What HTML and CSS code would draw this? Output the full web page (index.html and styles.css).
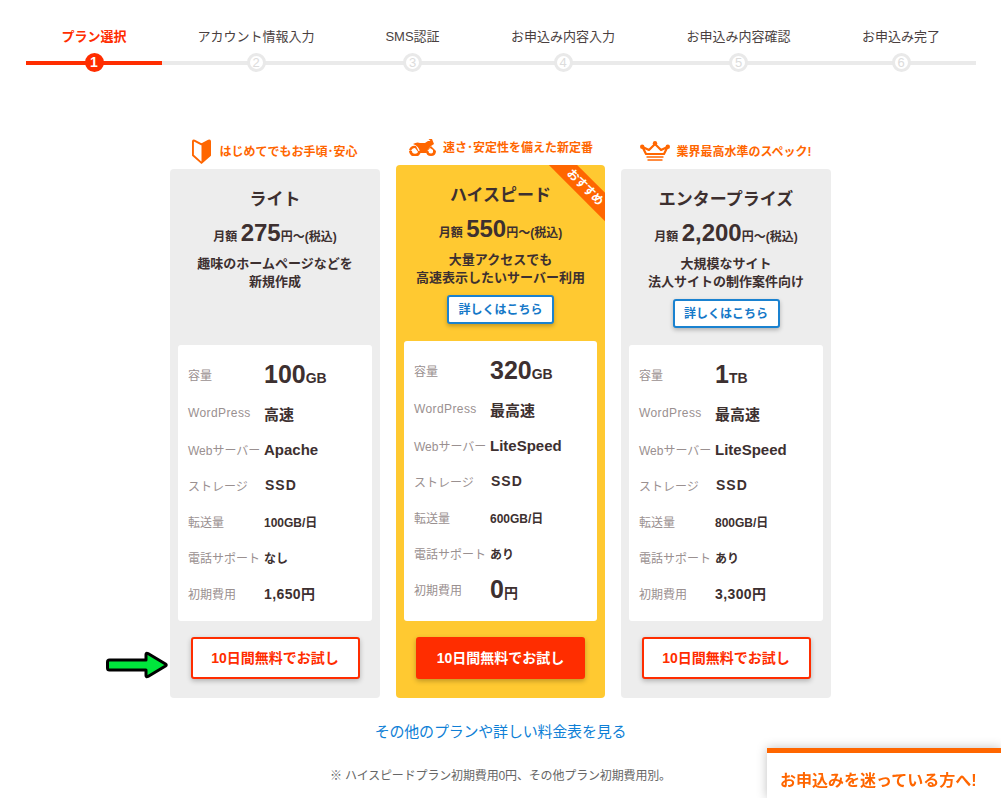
FILE: index.html
```html
<!DOCTYPE html>
<html lang="ja">
<head>
<meta charset="utf-8">
<title>プラン選択</title>
<link rel="stylesheet" href="styles.css">
</head>
<body>
<ol class="steps">
  <li class="step step-1 is-current"><span class="step-name">プラン選択</span><span class="step-num">1</span></li>
  <li class="step step-2"><span class="step-name">アカウント情報入力</span><span class="step-num">2</span></li>
  <li class="step step-3"><span class="step-name">SMS認証</span><span class="step-num">3</span></li>
  <li class="step step-4"><span class="step-name">お申込み内容入力</span><span class="step-num">4</span></li>
  <li class="step step-5"><span class="step-name">お申込み内容確認</span><span class="step-num">5</span></li>
  <li class="step step-6"><span class="step-name">お申込み完了</span><span class="step-num">6</span></li>
</ol>

<main class="plans">
  <section class="plan">
    <p class="tag">
      <svg class="tag-icon icon-leaf" viewBox="0 0 20 26"><path d="M2.500 1.500 L10 5.500 L17.500 1.500 Q19 1 19 2.500 V17 L10 25 L1 17 V2.500 Q1 1 2.500 1.500Z" fill="#fff" stroke="#ff6600" stroke-width="2" stroke-linejoin="round"/><path d="M10 5.500 L17.500 1.500 Q19 1 19 2.500 V17 L10 25Z" fill="#ff6600"/></svg>
      <span>はじめてでもお手頃･安心</span>
    </p>
    <div class="card">
      <div class="head">
        <h2>ライト</h2>
        <p class="price">月額 <b>275</b>円～(税込)</p>
        <p class="desc">趣味のホームページなどを<br>新規作成</p>
      </div>
      <dl class="specs">
        <dt>容量</dt><dd class="v-big"><b>100</b>GB</dd>
        <dt class="latin">WordPress</dt><dd>高速</dd>
        <dt>Webサーバー</dt><dd>Apache</dd>
        <dt>ストレージ</dt><dd class="v-ssd">SSD</dd>
        <dt>転送量</dt><dd class="v-small">100GB/日</dd>
        <dt>電話サポート</dt><dd class="v-tel">なし</dd>
        <dt>初期費用</dt><dd class="v-fee">1,650円</dd>
      </dl>
      <div class="foot"><a class="try" href="#">10日間無料でお試し</a></div>
    </div>
    <svg class="arrow" viewBox="0 0 62 28"><path d="M3.500 9 H40 V3.500 Q40 1.500 42 2.500 L59.500 13 Q61 14 59.500 15 L42 25.500 Q40 26.500 40 24.500 V19 H3.500 Q1.500 19 1.500 17 V11 Q1.500 9 3.500 9Z" fill="#00e63c" stroke="#000" stroke-width="3" stroke-linejoin="round"/></svg>
  </section>

  <section class="plan plan-featured">
    <p class="tag">
      <svg class="tag-icon icon-bike" viewBox="0 0 28 18"><path d="M1 13 A6 5.500 0 1 0 13 13 L10 13 A3 2.800 0 1 1 4 13Z" fill="#ff6600"/><path d="M1 12 Q3 7 8 8 L11 14 H18 L23 8 L28 13 Q28 18 23 18 Q18 18 18 13 L20.500 13 Q20.500 15.500 23 15.500 Q25.500 15.500 25 12 L22 10 L18 15 H11 L7 10 Q4 10 3 13Z" fill="#ff6600"/><path d="M5 6 Q9 3.500 12 5 H17 L20 3 H22.500 L20.500 1 H24 L26 6 L23 8 L18 14 H12 Q11 8 5 6Z" fill="#ff6600"/></svg>
      <span>速さ･安定性を備えた新定番</span>
    </p>
    <div class="card">
      <div class="ribbon"><span>おすすめ</span></div>
      <div class="head">
        <h2>ハイスピード</h2>
        <p class="price">月額 <b>550</b>円～(税込)</p>
        <p class="desc">大量アクセスでも<br>高速表示したいサーバー利用</p>
        <a class="more" href="#">詳しくはこちら</a>
      </div>
      <dl class="specs">
        <dt>容量</dt><dd class="v-big"><b>320</b>GB</dd>
        <dt class="latin">WordPress</dt><dd>最高速</dd>
        <dt>Webサーバー</dt><dd>LiteSpeed</dd>
        <dt>ストレージ</dt><dd class="v-ssd">SSD</dd>
        <dt>転送量</dt><dd class="v-small">600GB/日</dd>
        <dt>電話サポート</dt><dd class="v-tel">あり</dd>
        <dt>初期費用</dt><dd class="v-big"><b>0</b>円</dd>
      </dl>
      <div class="foot"><a class="try try-solid" href="#">10日間無料でお試し</a></div>
    </div>
  </section>

  <section class="plan">
    <p class="tag">
      <svg class="tag-icon icon-crown" viewBox="0 0 30 20"><path d="M6 13 L2.500 6 L9 9 L15 3 L21 9 L27.500 6 L24 13Z" fill="none" stroke="#ff6600" stroke-width="2.200" stroke-linejoin="round"/><circle cx="15" cy="2.200" r="2.200" fill="#ff6600"/><circle cx="2.200" cy="5.800" r="2.200" fill="#ff6600"/><circle cx="27.800" cy="5.800" r="2.200" fill="#ff6600"/><path d="M6.500 16 H23.500 M7.500 19 H22.500" stroke="#ff6600" stroke-width="1.700"/></svg>
      <span>業界最高水準のスペック!</span>
    </p>
    <div class="card">
      <div class="head">
        <h2>エンタープライズ</h2>
        <p class="price">月額 <b>2,200</b>円～(税込)</p>
        <p class="desc">大規模なサイト<br>法人サイトの制作案件向け</p>
        <a class="more" href="#">詳しくはこちら</a>
      </div>
      <dl class="specs">
        <dt>容量</dt><dd class="v-big"><b>1</b>TB</dd>
        <dt class="latin">WordPress</dt><dd>最高速</dd>
        <dt>Webサーバー</dt><dd>LiteSpeed</dd>
        <dt>ストレージ</dt><dd class="v-ssd">SSD</dd>
        <dt>転送量</dt><dd class="v-small">800GB/日</dd>
        <dt>電話サポート</dt><dd class="v-tel">あり</dd>
        <dt>初期費用</dt><dd class="v-fee">3,300円</dd>
      </dl>
      <div class="foot"><a class="try" href="#">10日間無料でお試し</a></div>
    </div>
  </section>
</main>

<p class="all-plans"><a href="#">その他のプランや詳しい料金表を見る</a></p>
<p class="note">※ ハイスピードプラン初期費用0円、その他プラン初期費用別。</p>

<aside class="float-box"><p>お申込みを迷っている方へ!</p></aside>
</body>
</html>
```

FILE: styles.css
```css
* { box-sizing: border-box; }
html, body { margin: 0; padding: 0; }
body {
  height: 798px;
  overflow: hidden;
  background: #fff;
  color: #3d3030;
  font-family: "Liberation Sans", "Noto Sans CJK JP", sans-serif;
}
p, h2, dl, dd, ol { margin: 0; padding: 0; }
a { text-decoration: none; }

/* stepper */
.steps {
  display: flex;
  list-style: none;
  margin: 0 25px 0 26px;
  padding-top: 28px;
}
.step {
  display: flex;
  flex-direction: column;
  align-items: center;
  background: linear-gradient(#eaeaea, #eaeaea) 0 33px / 100% 4px no-repeat;
  color: #4a3f3f;
  font-size: 13px;
  line-height: 18px;
}
.step-1 { width: 136px; }
.step-2 { width: 188px; }
.step-3 { width: 125px; }
.step-4 { width: 176px; }
.step-5 { width: 175px; }
.step-6 { width: 150px; }
.step-name { height: 25px; white-space: nowrap; }
.step-num {
  width: 19px;
  height: 19px;
  border: 3px solid #e9e9e9;
  border-radius: 50%;
  background: #fff;
  color: #dcdcdc;
  font-size: 13px;
  line-height: 13px;
  text-align: center;
}
.is-current {
  background-image: linear-gradient(#ff2d00, #ff2d00);
  color: #ff2d00;
  font-weight: bold;
}
.is-current .step-num {
  border-color: #ff2d00;
  background: #ff2d00;
  color: #fff;
  font-size: 14px;
}

/* plans */
.plans {
  display: grid;
  grid-template-columns: 210px 209px 210px;
  column-gap: 16px;
  width: 661px;
  height: 573px;
  margin: 53px 0 0 170px;
}
.plan {
  position: relative;
  display: flex;
  flex-direction: column;
  justify-content: flex-end;
}
.card {
  position: relative;
  overflow: hidden;
  display: flex;
  flex-direction: column;
  height: 529px;
  border-radius: 4px;
  background: #ededed;
}
.plan-featured .card { height: 533px; background: #ffc931; }

.tag {
  display: flex;
  align-items: center;
  justify-content: center;
  gap: 8px;
  height: 26px;
  margin-bottom: 5px;
  color: #ff6600;
  font-size: 12px;
  font-weight: bold;
  white-space: nowrap;
}
.plan-featured .tag { gap: 7px; }
.plan:last-child .tag { gap: 6px; }
.tag-icon { flex: none; display: block; }
.tag span { position: relative; top: -1px; }
.icon-leaf { width: 19px; height: 25px; }
.icon-bike { width: 28px; height: 18px; }
.icon-crown { width: 30px; height: 20px; }

.head {
  display: flex;
  flex-direction: column;
  align-items: center;
  height: 176px;
  padding-top: 19px;
  text-align: center;
}
.head h2 { font-size: 17px; line-height: 24px; font-weight: bold; }
.price { margin-top: 6px; font-size: 12px; line-height: 30px; font-weight: bold; }
.price b { font-size: 24px; }
.desc { margin-top: 3px; font-size: 13px; line-height: 18px; font-weight: bold; }
.more {
  width: 107px;
  height: 29px;
  margin-top: 8px;
  border: 2px solid #1a82d0;
  border-radius: 3px;
  background: #fff;
  box-shadow: 0 2px 4px rgba(0,0,0,.25);
  color: #1478c8;
  font-size: 12px;
  line-height: 27px;
  font-weight: bold;
}

.specs {
  flex: 1;
  display: grid;
  grid-template-columns: 76px 1fr;
  grid-template-rows: 41px repeat(6, 36px);
  align-items: center;
  margin: 0 8px;
  padding: 9px 0 0 10px;
  border-radius: 3px;
  background: #fff;
}
.specs dt { color: #9a9090; font-size: 12px; white-space: nowrap; }
.specs .latin { letter-spacing: .4px; }
.specs dd { font-size: 15px; font-weight: bold; white-space: nowrap; }
.specs .v-big { font-size: 14px; }
.specs .v-big b { font-size: 25px; }
.specs .v-ssd { padding-left: 1px; letter-spacing: 1px; font-size: 14px; }
.specs .v-small { font-size: 12px; }
.specs .v-tel { font-size: 12px; }
.specs .v-fee { font-size: 14px; letter-spacing: .4px; }

.foot {
  flex: none;
  display: flex;
  justify-content: center;
  height: 77px;
  padding-top: 16px;
}
.try {
  width: 169px;
  height: 42px;
  border: 2px solid #ff2d00;
  border-radius: 3px;
  background: #fff;
  box-shadow: 0 2px 5px rgba(0,0,0,.25);
  color: #ff2d00;
  font-size: 14px;
  line-height: 38px;
  font-weight: bold;
  text-align: center;
}
.try-solid { background: #ff2d00; color: #fff; }

.ribbon {
  position: absolute;
  top: 12px;
  right: -40px;
  width: 120px;
  height: 20px;
  background: #ff6600;
  color: #fff;
  font-size: 12px;
  line-height: 20px;
  letter-spacing: -.7px;
  font-weight: bold;
  text-align: center;
  transform: rotate(45deg);
}
.arrow {
  position: absolute;
  left: -64px;
  top: 526px;
  width: 62px;
  height: 28px;
}

.all-plans { margin-top: 24px; font-size: 15px; line-height: 20px; letter-spacing: -.2px; text-align: center; }
.all-plans a { color: #0f7fd6; }
.note { margin-top: 25px; color: #666; font-size: 12px; line-height: 18px; letter-spacing: -.15px; text-align: center; }

.float-box {
  position: fixed;
  right: 0;
  bottom: 0;
  width: 234px;
  height: 50px;
  padding: 18px 0 0 13px;
  border-top: 5px solid #ff6600;
  background: #fff;
  box-shadow: 0 0 10px rgba(0,0,0,.25);
  color: #ff6600;
  font-size: 16px;
  line-height: 20px;
  font-weight: bold;
  white-space: nowrap;
}
```
